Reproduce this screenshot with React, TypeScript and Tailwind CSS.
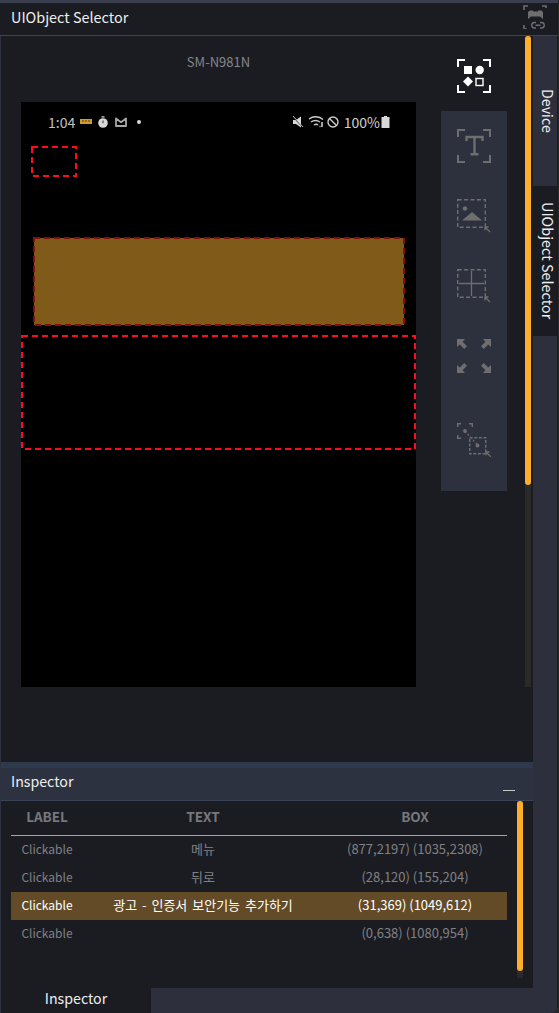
const rows = [
  { label: "Clickable", text: "메뉴", box: "(877,2197) (1035,2308)", active: false },
  { label: "Clickable", text: "뒤로", box: "(28,120) (155,204)", active: false },
  { label: "Clickable", text: "광고 - 인증서 보안기능 추가하기", box: "(31,369) (1049,612)", active: true },
  { label: "Clickable", text: "", box: "(0,638) (1080,954)", active: false },
];

function Corners({ color, width = 2 }: { color: string; width?: number }) {
  return (
    <path
      d="M1 8V1H8M26 1H33V8M1 26V33H8M26 33H33V26"
      fill="none"
      stroke={color}
      strokeWidth={width}
    />
  );
}

function Cursor() {
  return <path d="M28 28l5 5M28 28v3.5M28 28h3.5" fill="none" stroke="#6e6e6e" strokeWidth="1.3" />;
}

function SelectAllIcon() {
  return (
    <svg width="34" height="34" viewBox="0 0 34 34" className="block">
      <Corners color="#ffffff" />
      <rect x="7" y="7" width="8" height="8" fill="#ffffff" />
      <circle cx="22.7" cy="11" r="4.2" fill="#ffffff" />
      <path d="M11 17.5L16 22.5L11 27.5L6 22.5Z" fill="#ffffff" />
      <rect x="19" y="19.5" width="7" height="7" fill="none" stroke="#ffffff" strokeWidth="1.4" />
    </svg>
  );
}

function TextIcon() {
  return (
    <svg width="34" height="34" viewBox="0 0 34 34" className="block">
      <Corners color="#6e6e6e" />
      <path d="M9.5 12V8H25.5V12M17.5 8V25M13.5 25.2H21.5" fill="none" stroke="#6e6e6e" strokeWidth="2.4" />
    </svg>
  );
}

function ImageIcon() {
  return (
    <svg width="34" height="34" viewBox="0 0 34 34" className="block">
      <rect x="0.7" y="0.7" width="27.6" height="27.6" fill="none" stroke="#6e6e6e" strokeWidth="1.4" strokeDasharray="4 2.4" />
      <circle cx="8" cy="9.5" r="2.2" fill="#6e6e6e" />
      <path d="M5 21.5L15 13L25 21.5Z" fill="#6e6e6e" />
      <Cursor />
    </svg>
  );
}

function GridIcon() {
  return (
    <svg width="34" height="34" viewBox="0 0 34 34" className="block">
      <rect x="0.7" y="0.7" width="27.6" height="27.6" fill="none" stroke="#6e6e6e" strokeWidth="1.4" strokeDasharray="4 2.4" />
      <path d="M2 14.5H27M14.5 2V27" fill="none" stroke="#6e6e6e" strokeWidth="1.3" />
      <Cursor />
    </svg>
  );
}

function ExpandIcon() {
  return (
    <svg width="34" height="34" viewBox="0 0 34 34" className="block">
      <g fill="#6e6e6e">
        <path d="M0 0H8L5.6 2.8L10 7.2L7.2 10L2.8 5.6L0 8Z" />
        <path d="M34 0H26L28.4 2.8L24 7.2L26.8 10L31.2 5.6L34 8Z" />
        <path d="M0 34H8L5.6 31.2L10 26.8L7.2 24L2.8 28.4L0 26Z" />
        <path d="M34 34H26L28.4 31.2L24 26.8L26.8 24L31.2 28.4L34 26Z" />
      </g>
    </svg>
  );
}

function ScaleIcon() {
  return (
    <svg width="34" height="34" viewBox="0 0 34 34" className="block">
      <path d="M0.7 4V0.7H4M12 0.7H15.3V4M0.7 12V15.3H4" fill="none" stroke="#6e6e6e" strokeWidth="1.4" />
      <circle cx="8" cy="8" r="1.9" fill="#6e6e6e" />
      <path d="M8 8L20.5 22" fill="none" stroke="#6e6e6e" strokeWidth="1.2" strokeDasharray="2 2" />
      <rect x="12.7" y="14.7" width="16" height="16" fill="none" stroke="#6e6e6e" strokeWidth="1.4" strokeDasharray="3 1.6" />
      <circle cx="20.5" cy="22.5" r="1.9" fill="#6e6e6e" />
      <path d="M29 29l5 5M29 29v3.5M29 29h3.5" fill="none" stroke="#6e6e6e" strokeWidth="1.3" />
    </svg>
  );
}

function DeviceLinkIcon() {
  return (
    <svg width="24" height="24" viewBox="0 0 24 24" className="block">
      <path d="M1 5V1H5M19 1H23V3M1 20V24H4" fill="none" stroke="#6e6e6e" strokeWidth="1.6" />
      <path d="M5 7L7 5.5H10V6.5H15V5.5H18.5L20 7V14L17 11.5H8L5 14Z" fill="#6e6e6e" />
      <path
        d="M13 17.5H11.5A2.7 2.7 0 0 0 11.5 23H13M17 17.5H18.5A2.7 2.7 0 0 1 18.5 23H17M12.5 20.2H17.5"
        fill="none"
        stroke="#6e6e6e"
        strokeWidth="1.4"
      />
    </svg>
  );
}

function StatusLeftIcons() {
  return (
    <svg width="62" height="14" viewBox="0 0 62 14" className="block">
      <rect x="0" y="4" width="12" height="5" fill="#d09a2c" />
      <path d="M3 5v2M6 5v2M9 5v2" stroke="#4a3510" strokeWidth="0.9" />
      <circle cx="23" cy="8" r="4.8" fill="#d8d8d8" />
      <path d="M21.5 1.8H24.5" stroke="#d8d8d8" strokeWidth="1.2" />
      <path d="M23 5.5V8.2" stroke="#333" strokeWidth="1" />
      <path d="M36 11V3.4L41 7.2L46 3.4V11H36Z" fill="none" stroke="#a8a8a8" strokeWidth="1.8" strokeLinejoin="round" />
      <circle cx="59" cy="7" r="2" fill="#d8d8d8" />
    </svg>
  );
}

function StatusRightIcons() {
  return (
    <svg width="48" height="14" viewBox="0 0 48 14" className="block">
      <path d="M1 5H4L9 1.5V12.5L4 9H1Z" fill="#d8d8d8" />
      <path d="M1 2L11 12.5" stroke="#000" strokeWidth="1" />
      <path d="M1 1L11 12" stroke="#d8d8d8" strokeWidth="0.9" />
      <path d="M17 4C21 1 27 1 31 4.5M19 7C22 5 25 5 28 7M22 10C23.5 9 25 9 26 10" fill="none" stroke="#cccccc" strokeWidth="1.4" />
      <path d="M30 7V12M27.5 11.5H28.5" stroke="#cccccc" strokeWidth="1.6" />
      <circle cx="41" cy="7" r="5" fill="none" stroke="#cccccc" strokeWidth="1.4" />
      <path d="M37.5 3.5L44.5 10.5" stroke="#cccccc" strokeWidth="1.4" />
    </svg>
  );
}

function BatteryIcon() {
  return (
    <svg width="9" height="12" viewBox="0 0 9 12" className="block">
      <path d="M3 0H6V1H8.5V12H0.5V1H3Z" fill="#d8d8d8" />
    </svg>
  );
}

function SelectionBoxes() {
  return (
    <svg width="395" height="585" viewBox="0 0 395 585" className="absolute left-0 top-0" shapeRendering="crispEdges">
      <rect x="11" y="45" width="44" height="29" fill="none" stroke="#ff0a1e" strokeWidth="2" strokeDasharray="6 4" />
      <rect x="13" y="136" width="370" height="87" fill="#7f5a18" stroke="#860c14" strokeWidth="2" strokeDasharray="6 4" />
      <rect x="1" y="234" width="393" height="113" fill="none" stroke="#ff0a1e" strokeWidth="2" strokeDasharray="6 4" />
    </svg>
  );
}

export default function App() {
  return (
    <div className="h-[1013px] w-[559px] overflow-hidden bg-[#26272b] font-['Noto_Sans_CJK_KR','Noto_Sans',sans-serif]">
      <div className="flex h-full w-[558px] flex-col overflow-hidden rounded-br-[8px] border-t-[3px] border-[#3a3e4e] bg-[#1b1c22]">
        {/* Title bar */}
        <div className="flex h-[33px] shrink-0 items-center justify-between border-b border-[#3f4250] pl-[11px] pr-[11px]">
          <span className="mb-[4px] text-[14.4px] leading-none text-[#eeeeee]">UIObject Selector</span>
          <div className="mb-[4px]">
            <DeviceLinkIcon />
          </div>
        </div>

        <div className="flex min-h-0 flex-1">
          <div className="flex w-[533px] flex-col border-l border-[#2d3140]">
            {/* Device panel */}
            <div className="flex h-[726px] shrink-0">
              <div className="ml-[20px] w-[395px]">
                <div className="mt-[17px] h-[18px] text-center text-[13px] leading-[18px] text-[#85868a]">SM-N981N</div>
                <div className="relative mt-[31px] h-[585px] w-[395px] bg-black">
                  <div className="flex h-[40px] items-center justify-between pl-[27px] pr-[26px]">
                    <div className="flex items-center gap-[5px]">
                      <span className="text-[14px] leading-none text-[#c0c0c0]">1:04</span>
                      <StatusLeftIcons />
                    </div>
                    <div className="flex items-center gap-[1px]">
                      <StatusRightIcons />
                      <span className="ml-[3px] text-[14px] leading-none text-[#d0d0d0]">100%</span>
                      <BatteryIcon />
                    </div>
                  </div>
                  <SelectionBoxes />
                </div>
              </div>

              <div className="ml-[25px] flex w-[66px] flex-col items-center">
                <div className="mt-[23px]">
                  <SelectAllIcon />
                </div>
                <div className="mt-[18px] flex h-[380px] w-[66px] flex-col items-center bg-[#2d303d] pt-[18px]">
                  <TextIcon />
                  <div className="mt-[36px]"><ImageIcon /></div>
                  <div className="mt-[36px]"><GridIcon /></div>
                  <div className="mt-[36px]"><ExpandIcon /></div>
                  <div className="mt-[50px]"><ScaleIcon /></div>
                </div>
              </div>

              <div className="ml-[18px] h-[651px] w-[6px] bg-[#2a2a2a]">
                <div className="h-[449px] w-[6px] rounded-full bg-[#fdae2c]" />
              </div>
            </div>

            <div className="h-[6px] shrink-0 bg-[#2e3a4c]" />

            {/* Inspector */}
            <div className="flex h-[33px] shrink-0 items-center justify-between border-b border-[#3a4258] bg-[#2d3240] pb-[5px] pl-[10px] pr-[18px]">
              <span className="text-[14.2px] leading-none text-[#eeeeee]">Inspector</span>
              <div className="mt-[17px] h-px w-[12px] bg-[#c8c8c8]" />
            </div>

            <div className="flex h-[187px] shrink-0 pl-[10px]">
              <div className="w-[496px]">
                <div className="grid h-[35px] grid-cols-[72px_240px_184px] items-center border-b border-[#a5a5a5] pb-[4px] text-center text-[13.5px] font-bold text-[#77787c]">
                  <span>LABEL</span>
                  <span>TEXT</span>
                  <span>BOX</span>
                </div>
                {rows.map((row) => (
                  <div
                    key={row.box}
                    className={
                      row.active
                        ? "grid h-[28px] grid-cols-[72px_240px_184px] items-center bg-[#644b28] pb-[2px] text-center text-white"
                        : "grid h-[28px] grid-cols-[72px_240px_184px] items-center pb-[2px] text-center text-[#808185]"
                    }
                  >
                    <span className="text-[12px]">{row.label}</span>
                    <span className="text-[13px] [word-spacing:2px]">{row.text}</span>
                    <span className="text-[13px]">{row.box}</span>
                  </div>
                ))}
              </div>
              <div className="ml-[10px] h-[177px] w-[6px] bg-[#2a2a2a]">
                <div className="h-[170px] w-[6px] rounded-full bg-[#fdae2c]" />
              </div>
            </div>

            <div className="flex min-h-0 flex-1 bg-[#2d2f3c]">
              <div className="flex w-[150px] items-center justify-center bg-[#1b1c22] pb-[5px] text-[14.2px] leading-none text-[#eeeeee]">
                Inspector
              </div>
            </div>
          </div>

          {/* Vertical tabs */}
          <div className="flex w-[24px] flex-col bg-[#2d2f3c]">
            <div className="flex h-[150px] shrink-0 items-center justify-center pl-[6px] text-[14.2px] leading-none text-[#eeeeee] [writing-mode:vertical-rl]">
              Device
            </div>
            <div className="flex h-[150px] shrink-0 items-center justify-center bg-[#1b1c22] pl-[6px] text-[14.4px] leading-none text-[#eeeeee] [writing-mode:vertical-rl]">
              UIObject Selector
            </div>
          </div>
        </div>
      </div>
    </div>
  );
}
